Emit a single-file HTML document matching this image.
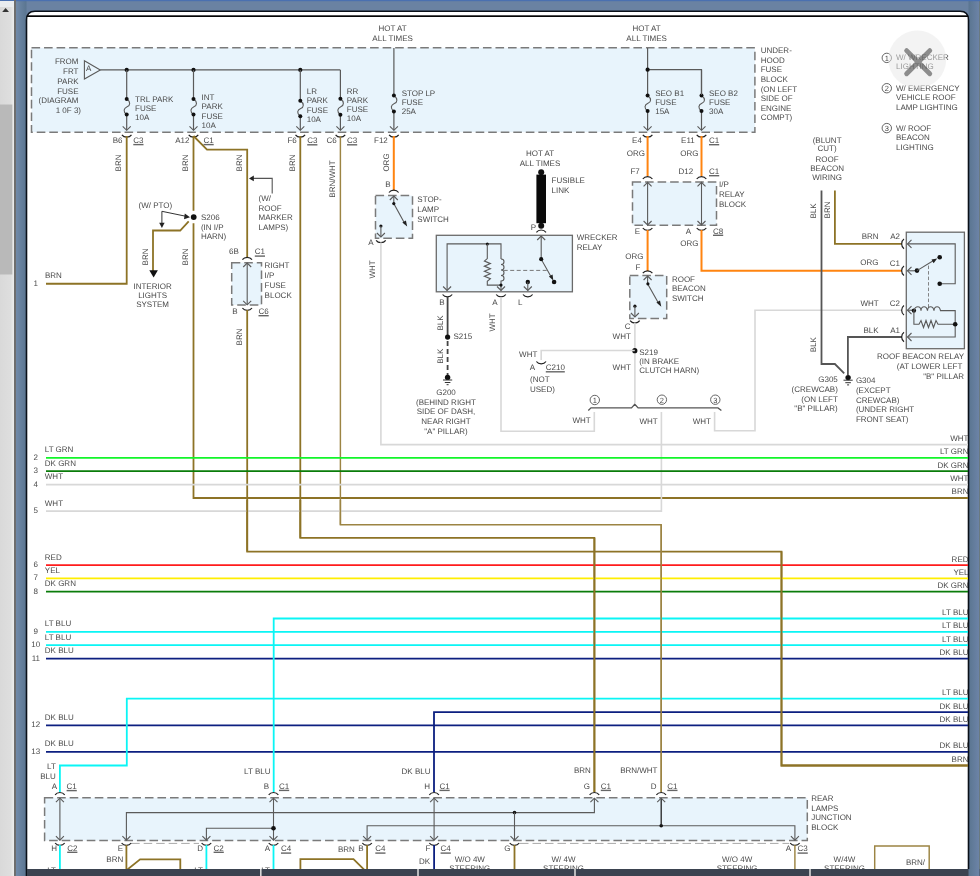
<!DOCTYPE html>
<html><head><meta charset="utf-8"><style>
html,body{margin:0;padding:0;width:980px;height:876px;overflow:hidden;background:#6b83a3;}
svg{position:absolute;left:0;top:0;will-change:transform;}
text{font-family:"Liberation Sans",sans-serif;text-rendering:geometricPrecision;}
</style></head><body>
<svg width="980" height="876" viewBox="0 0 980 876">
<defs>
<linearGradient id="bg" x1="0" y1="0" x2="0" y2="1">
<stop offset="0" stop-color="#5f7ba6"/><stop offset="0.03" stop-color="#6d86a8"/><stop offset="1" stop-color="#6a83a2"/>
</linearGradient>
<linearGradient id="lg" x1="0" y1="0" x2="1" y2="0"><stop offset="0" stop-color="#718aa9"/><stop offset="1" stop-color="#5a7590"/></linearGradient>
<linearGradient id="rg" x1="0" y1="0" x2="1" y2="0"><stop offset="0" stop-color="#5a7590"/><stop offset="1" stop-color="#6d84a8"/></linearGradient>
<linearGradient id="sb" x1="0" y1="0" x2="1" y2="0">
<stop offset="0" stop-color="#d9d9d9"/><stop offset="0.75" stop-color="#dedede"/><stop offset="1" stop-color="#ececec"/>
</linearGradient>
<clipPath id="clip"><rect x="27" y="17" width="941" height="852"/></clipPath>
</defs>
<rect x="0" y="0" width="980" height="876" fill="#6a82a2"/>
<rect x="16" y="0" width="10.5" height="876" fill="url(#lg)"/>
<rect x="968.5" y="0" width="11" height="876" fill="url(#rg)"/>
<rect x="979" y="0" width="1" height="876" fill="#6a7a80"/>
<rect x="0" y="0" width="980" height="1.2" fill="#4a70b0"/>
<rect x="0" y="1" width="14" height="875" fill="url(#sb)"/>
<rect x="0" y="1" width="14" height="6" fill="#e9ecef"/>
<path d="M2.2,12 L5.6,8 L9,12 Z" fill="#333"/>
<rect x="0" y="104.5" width="12.3" height="170" fill="#b9b9b9"/>
<rect x="14" y="0" width="2" height="876" fill="#6e6e6e"/>
<path d="M26.5,876 V20 Q26.5,11.2 35,11.2 H960 Q968.5,11.2 968.5,20 V876" fill="#fff" stroke="#0a1018" stroke-width="1.6"/>
<rect x="27" y="15.3" width="941" height="1.7" fill="#050505"/>
<rect x="27" y="869" width="953" height="7" fill="#3b4350"/>
<rect x="968.5" y="869" width="11" height="7" fill="url(#rg)"/>

<g clip-path="url(#clip)">
<rect x="31.5" y="47.8" width="723.4" height="84.39999999999999" fill="#e8f4fc" stroke="#7a7a7a" stroke-width="1.5" stroke-dasharray="8.6 3.94"/>
<text x="78.5" y="64.1" text-anchor="end" fill="#4a4a4a" font-size="8">FROM</text>
<text x="78.5" y="73.9" text-anchor="end" fill="#4a4a4a" font-size="8">FRT</text>
<text x="78.5" y="83.7" text-anchor="end" fill="#4a4a4a" font-size="8">PARK</text>
<text x="78.5" y="93.5" text-anchor="end" fill="#4a4a4a" font-size="8">FUSE</text>
<text x="78.5" y="103.3" text-anchor="end" fill="#4a4a4a" font-size="8">(DIAGRAM</text>
<text x="81" y="113.1" text-anchor="end" fill="#4a4a4a" font-size="8">1 0F 3)</text>
<path d="M84.4,60.7 L100.3,69.9 L84.4,79 Z" stroke="#5a5a5a" stroke-width="1.1" fill="none"/>
<text x="86" y="71.2" text-anchor="start" fill="#4a4a4a" font-size="8">A</text>
<path d="M100.3,69.9 H340.4" stroke="#5a5a5a" stroke-width="1.2" fill="none"/>
<circle cx="126.7" cy="69.9" r="2.1" fill="#111"/>
<circle cx="193.5" cy="69.9" r="2.1" fill="#111"/>
<circle cx="300.3" cy="69.9" r="2.1" fill="#111"/>
<path d="M126.7,69.9 V98.9 M126.7,114.6 V130.3" stroke="#5a5a5a" stroke-width="1.2" fill="none"/>
<path d="M126.7,98.9 C130.9,101.726 130.3,105.494 127.10000000000001,106.75 C123.7,108.32 122.7,111.46 126.7,114.6" stroke="#5a5a5a" stroke-width="1.1" fill="none"/>
<circle cx="126.7" cy="98.9" r="2" fill="#111"/>
<circle cx="126.7" cy="114.6" r="2" fill="#111"/>
<path d="M122.7,126.30000000000001 L126.7,130.3 L130.7,126.30000000000001" stroke="#5a5a5a" stroke-width="1.1" fill="none"/>
<path d="M121.9,134.8 C124.10000000000001,137.9 129.3,137.9 131.5,134.8" stroke="#222" stroke-width="1.2" fill="none"/>
<path d="M193.5,69.9 V98.9 M193.5,114.6 V130.3" stroke="#5a5a5a" stroke-width="1.2" fill="none"/>
<path d="M193.5,98.9 C197.7,101.726 197.1,105.494 193.9,106.75 C190.5,108.32 189.5,111.46 193.5,114.6" stroke="#5a5a5a" stroke-width="1.1" fill="none"/>
<circle cx="193.5" cy="98.9" r="2" fill="#111"/>
<circle cx="193.5" cy="114.6" r="2" fill="#111"/>
<path d="M189.5,126.30000000000001 L193.5,130.3 L197.5,126.30000000000001" stroke="#5a5a5a" stroke-width="1.1" fill="none"/>
<path d="M188.7,134.8 C190.9,137.9 196.1,137.9 198.3,134.8" stroke="#222" stroke-width="1.2" fill="none"/>
<path d="M300.3,69.9 V100.7 M300.3,116.2 V130.3" stroke="#5a5a5a" stroke-width="1.2" fill="none"/>
<path d="M300.3,100.7 C304.5,103.49000000000001 303.90000000000003,107.21000000000001 300.7,108.45 C297.3,110.0 296.3,113.10000000000001 300.3,116.2" stroke="#5a5a5a" stroke-width="1.1" fill="none"/>
<circle cx="300.3" cy="100.7" r="2" fill="#111"/>
<circle cx="300.3" cy="116.2" r="2" fill="#111"/>
<path d="M296.3,126.30000000000001 L300.3,130.3 L304.3,126.30000000000001" stroke="#5a5a5a" stroke-width="1.1" fill="none"/>
<path d="M295.5,134.8 C297.7,137.9 302.90000000000003,137.9 305.1,134.8" stroke="#222" stroke-width="1.2" fill="none"/>
<path d="M340.4,69.9 V98.8 M340.4,114.7 V130.3" stroke="#5a5a5a" stroke-width="1.2" fill="none"/>
<path d="M340.4,98.8 C344.59999999999997,101.66199999999999 344.0,105.478 340.79999999999995,106.75 C337.4,108.34 336.4,111.52 340.4,114.7" stroke="#5a5a5a" stroke-width="1.1" fill="none"/>
<circle cx="340.4" cy="98.8" r="2" fill="#111"/>
<circle cx="340.4" cy="114.7" r="2" fill="#111"/>
<path d="M336.4,126.30000000000001 L340.4,130.3 L344.4,126.30000000000001" stroke="#5a5a5a" stroke-width="1.1" fill="none"/>
<path d="M335.59999999999997,134.8 C337.79999999999995,137.9 343.0,137.9 345.2,134.8" stroke="#222" stroke-width="1.2" fill="none"/>
<path d="M393.9,48 V95.6 M393.9,111.4 V130.3" stroke="#5a5a5a" stroke-width="1.2" fill="none"/>
<path d="M393.9,95.6 C398.09999999999997,98.444 397.5,102.236 394.29999999999995,103.5 C390.9,105.08 389.9,108.24000000000001 393.9,111.4" stroke="#5a5a5a" stroke-width="1.1" fill="none"/>
<circle cx="393.9" cy="95.6" r="2" fill="#111"/>
<circle cx="393.9" cy="111.4" r="2" fill="#111"/>
<path d="M389.9,126.30000000000001 L393.9,130.3 L397.9,126.30000000000001" stroke="#5a5a5a" stroke-width="1.1" fill="none"/>
<path d="M389.09999999999997,134.8 C391.29999999999995,137.9 396.5,137.9 398.7,134.8" stroke="#222" stroke-width="1.2" fill="none"/>
<path d="M647.6,48 V95.6 M647.6,111 V130.3" stroke="#5a5a5a" stroke-width="1.2" fill="none"/>
<path d="M647.6,95.6 C651.8000000000001,98.372 651.2,102.068 648.0,103.3 C644.6,104.84 643.6,107.92 647.6,111" stroke="#5a5a5a" stroke-width="1.1" fill="none"/>
<circle cx="647.6" cy="95.6" r="2" fill="#111"/>
<circle cx="647.6" cy="111" r="2" fill="#111"/>
<path d="M643.6,126.30000000000001 L647.6,130.3 L651.6,126.30000000000001" stroke="#5a5a5a" stroke-width="1.1" fill="none"/>
<path d="M642.8000000000001,134.8 C645.0,137.9 650.2,137.9 652.4,134.8" stroke="#222" stroke-width="1.2" fill="none"/>
<path d="M701.5,69.9 V95.6 M701.5,111 V130.3" stroke="#5a5a5a" stroke-width="1.2" fill="none"/>
<path d="M701.5,95.6 C705.7,98.372 705.1,102.068 701.9,103.3 C698.5,104.84 697.5,107.92 701.5,111" stroke="#5a5a5a" stroke-width="1.1" fill="none"/>
<circle cx="701.5" cy="95.6" r="2" fill="#111"/>
<circle cx="701.5" cy="111" r="2" fill="#111"/>
<path d="M697.5,126.30000000000001 L701.5,130.3 L705.5,126.30000000000001" stroke="#5a5a5a" stroke-width="1.1" fill="none"/>
<path d="M696.7,134.8 C698.9,137.9 704.1,137.9 706.3,134.8" stroke="#222" stroke-width="1.2" fill="none"/>
<path d="M647.6,69.7 H701.5 V95" stroke="#5a5a5a" stroke-width="1.2" fill="none"/>
<circle cx="647.6" cy="69.7" r="2.1" fill="#111"/>
<text x="135.1" y="102.0" text-anchor="start" fill="#4a4a4a" font-size="8">TRL PARK</text>
<text x="135.1" y="111.0" text-anchor="start" fill="#4a4a4a" font-size="8">FUSE</text>
<text x="135.1" y="120.0" text-anchor="start" fill="#4a4a4a" font-size="8">10A</text>
<text x="201.6" y="100.2" text-anchor="start" fill="#4a4a4a" font-size="8">INT</text>
<text x="201.6" y="109.4" text-anchor="start" fill="#4a4a4a" font-size="8">PARK</text>
<text x="201.6" y="118.6" text-anchor="start" fill="#4a4a4a" font-size="8">FUSE</text>
<text x="201.6" y="127.8" text-anchor="start" fill="#4a4a4a" font-size="8">10A</text>
<text x="306.7" y="94.1" text-anchor="start" fill="#4a4a4a" font-size="8">LR</text>
<text x="306.7" y="103.3" text-anchor="start" fill="#4a4a4a" font-size="8">PARK</text>
<text x="306.7" y="112.5" text-anchor="start" fill="#4a4a4a" font-size="8">FUSE</text>
<text x="306.7" y="121.7" text-anchor="start" fill="#4a4a4a" font-size="8">10A</text>
<text x="346.8" y="94.1" text-anchor="start" fill="#4a4a4a" font-size="8">RR</text>
<text x="346.8" y="103.2" text-anchor="start" fill="#4a4a4a" font-size="8">PARK</text>
<text x="346.8" y="112.3" text-anchor="start" fill="#4a4a4a" font-size="8">FUSE</text>
<text x="346.8" y="121.4" text-anchor="start" fill="#4a4a4a" font-size="8">10A</text>
<text x="401.7" y="96.2" text-anchor="start" fill="#4a4a4a" font-size="8">STOP LP</text>
<text x="401.7" y="105.2" text-anchor="start" fill="#4a4a4a" font-size="8">FUSE</text>
<text x="401.7" y="114.2" text-anchor="start" fill="#4a4a4a" font-size="8">25A</text>
<text x="655.2" y="96.3" text-anchor="start" fill="#4a4a4a" font-size="8">SEO B1</text>
<text x="655.2" y="105.1" text-anchor="start" fill="#4a4a4a" font-size="8">FUSE</text>
<text x="655.2" y="113.9" text-anchor="start" fill="#4a4a4a" font-size="8">15A</text>
<text x="709" y="96.3" text-anchor="start" fill="#4a4a4a" font-size="8">SEO B2</text>
<text x="709" y="105.1" text-anchor="start" fill="#4a4a4a" font-size="8">FUSE</text>
<text x="709" y="113.9" text-anchor="start" fill="#4a4a4a" font-size="8">30A</text>
<text x="392.6" y="31.2" text-anchor="middle" fill="#4a4a4a" font-size="8">HOT AT</text>
<text x="392.6" y="41.1" text-anchor="middle" fill="#4a4a4a" font-size="8">ALL TIMES</text>
<text x="646.6" y="31.0" text-anchor="middle" fill="#4a4a4a" font-size="8">HOT AT</text>
<text x="646.6" y="40.9" text-anchor="middle" fill="#4a4a4a" font-size="8">ALL TIMES</text>
<text x="760.7" y="53.2" text-anchor="start" fill="#4a4a4a" font-size="8">UNDER-</text>
<text x="760.7" y="62.8" text-anchor="start" fill="#4a4a4a" font-size="8">HOOD</text>
<text x="760.7" y="72.4" text-anchor="start" fill="#4a4a4a" font-size="8">FUSE</text>
<text x="760.7" y="82.0" text-anchor="start" fill="#4a4a4a" font-size="8">BLOCK</text>
<text x="760.7" y="91.6" text-anchor="start" fill="#4a4a4a" font-size="8">(ON LEFT</text>
<text x="760.7" y="101.2" text-anchor="start" fill="#4a4a4a" font-size="8">SIDE OF</text>
<text x="760.7" y="110.8" text-anchor="start" fill="#4a4a4a" font-size="8">ENGINE</text>
<text x="760.7" y="120.4" text-anchor="start" fill="#4a4a4a" font-size="8">COMPT)</text>
<text x="122.5" y="142.9" text-anchor="end" fill="#4a4a4a" font-size="8">B6</text>
<text x="133.3" y="142.9" fill="#4a4a4a" font-size="8">C3</text>
<rect x="133.3" y="143.9" width="10.2" height="1.4" fill="#666"/>
<text x="189.5" y="142.9" text-anchor="end" fill="#4a4a4a" font-size="8">A12</text>
<text x="203.5" y="142.9" fill="#4a4a4a" font-size="8">C1</text>
<rect x="203.5" y="143.9" width="10.2" height="1.4" fill="#666"/>
<text x="296.8" y="143.1" text-anchor="end" fill="#4a4a4a" font-size="8">F6</text>
<text x="307.2" y="143.1" fill="#4a4a4a" font-size="8">C3</text>
<rect x="307.2" y="144.1" width="10.2" height="1.4" fill="#666"/>
<text x="336.7" y="143.1" text-anchor="end" fill="#4a4a4a" font-size="8">C6</text>
<text x="347" y="143.1" fill="#4a4a4a" font-size="8">C3</text>
<rect x="347" y="144.1" width="10.2" height="1.4" fill="#666"/>
<text x="387.8" y="143.1" text-anchor="end" fill="#4a4a4a" font-size="8">F12</text>
<text x="641.9" y="143.0" text-anchor="end" fill="#4a4a4a" font-size="8">E4</text>
<text x="694.7" y="143.0" text-anchor="end" fill="#4a4a4a" font-size="8">E11</text>
<text x="709" y="143.0" fill="#4a4a4a" font-size="8">C1</text>
<rect x="709" y="144.0" width="10.2" height="1.4" fill="#666"/>
<circle cx="886.8" cy="57.9" r="4.7" fill="none" stroke="#555" stroke-width="0.9"/>
<text x="886.8" y="60.7" text-anchor="middle" fill="#4a4a4a" font-size="7.5">1</text>
<text x="896" y="60.0" text-anchor="start" fill="#4a4a4a" font-size="8">W/ WRECKER</text>
<text x="896" y="69.2" text-anchor="start" fill="#4a4a4a" font-size="8">LIGHTING</text>
<circle cx="886.8" cy="88.2" r="4.7" fill="none" stroke="#555" stroke-width="0.9"/>
<text x="886.8" y="91.0" text-anchor="middle" fill="#4a4a4a" font-size="7.5">2</text>
<text x="896" y="90.8" text-anchor="start" fill="#4a4a4a" font-size="8">W/ EMERGENCY</text>
<text x="896" y="100.4" text-anchor="start" fill="#4a4a4a" font-size="8">VEHICLE ROOF</text>
<text x="896" y="110.0" text-anchor="start" fill="#4a4a4a" font-size="8">LAMP LIGHTING</text>
<circle cx="886.8" cy="128.1" r="4.7" fill="none" stroke="#555" stroke-width="0.9"/>
<text x="886.8" y="130.9" text-anchor="middle" fill="#4a4a4a" font-size="7.5">3</text>
<text x="896" y="131.2" text-anchor="start" fill="#4a4a4a" font-size="8">W/ ROOF</text>
<text x="896" y="140.45" text-anchor="start" fill="#4a4a4a" font-size="8">BEACON</text>
<text x="896" y="149.7" text-anchor="start" fill="#4a4a4a" font-size="8">LIGHTING</text>
<path d="M126.7,136 V283.75 H46" stroke="#8d7326" stroke-width="1.8" fill="none" stroke-linejoin="miter"/>
<text x="0" y="0" text-anchor="middle" fill="#4a4a4a" font-size="8" transform="translate(118.5 163) rotate(-90)" dominant-baseline="central">BRN</text>
<text x="45" y="277.8" text-anchor="start" fill="#4a4a4a" font-size="8">BRN</text>
<text x="35.8" y="285.8" text-anchor="middle" fill="#4a4a4a" font-size="8">1</text>
<path d="M193.5,136 V210.8 M193.5,223.2 V498 H968" stroke="#8d7326" stroke-width="1.8" fill="none" stroke-linejoin="miter"/>
<path d="M193.5,136 L207,149.7 H247.2 V257" stroke="#8d7326" stroke-width="1.8" fill="none" stroke-linejoin="miter"/>
<text x="0" y="0" text-anchor="middle" fill="#4a4a4a" font-size="8" transform="translate(185.5 163) rotate(-90)" dominant-baseline="central">BRN</text>
<text x="0" y="0" text-anchor="middle" fill="#4a4a4a" font-size="8" transform="translate(239 163) rotate(-90)" dominant-baseline="central">BRN</text>
<text x="0" y="0" text-anchor="middle" fill="#4a4a4a" font-size="8" transform="translate(185.5 257) rotate(-90)" dominant-baseline="central">BRN</text>
<circle cx="193.7" cy="217.1" r="2.9" fill="#111"/>
<text x="200.9" y="220.1" text-anchor="start" fill="#4a4a4a" font-size="8">S206</text>
<text x="200.9" y="229.55" text-anchor="start" fill="#4a4a4a" font-size="8">(IN I/P</text>
<text x="200.9" y="239.0" text-anchor="start" fill="#4a4a4a" font-size="8">HARN)</text>
<text x="138.6" y="208.1" text-anchor="start" fill="#4a4a4a" font-size="8">(W/ PTO)</text>
<path d="M161.9,225 V211.3 L186,216.3" stroke="#333" stroke-width="1" fill="none"/>
<path d="M190,217.3 L184.8,213.6 L184,219.2 Z" fill="#222"/>
<path d="M161.9,228 L159.2,222.8 L164.6,222.8 Z" fill="#222"/>
<path d="M188.7,221.3 L180.2,230.5 H153 V271" stroke="#8d7326" stroke-width="1.8" fill="none" stroke-linejoin="miter"/>
<path d="M149.3,270.3 L157.9,270.3 L153.6,277.5 Z" fill="#111"/>
<text x="0" y="0" text-anchor="middle" fill="#4a4a4a" font-size="8" transform="translate(145 257) rotate(-90)" dominant-baseline="central">BRN</text>
<text x="152.6" y="289.3" text-anchor="middle" fill="#4a4a4a" font-size="8">INTERIOR</text>
<text x="152.6" y="298.1" text-anchor="middle" fill="#4a4a4a" font-size="8">LIGHTS</text>
<text x="152.6" y="306.9" text-anchor="middle" fill="#4a4a4a" font-size="8">SYSTEM</text>
<path d="M272.2,193.5 V178.4 H251" stroke="#555" stroke-width="1.1" fill="none"/>
<path d="M249,178.4 L253.8,175.6 L253.8,181.2 Z" fill="#222"/>
<text x="258.5" y="200.9" text-anchor="start" fill="#4a4a4a" font-size="8">(W/</text>
<text x="258.5" y="210.5" text-anchor="start" fill="#4a4a4a" font-size="8">ROOF</text>
<text x="258.5" y="220.1" text-anchor="start" fill="#4a4a4a" font-size="8">MARKER</text>
<text x="258.5" y="229.7" text-anchor="start" fill="#4a4a4a" font-size="8">LAMPS)</text>
<path d="M242.39999999999998,259.7 C244.6,256.59999999999997 249.79999999999998,256.59999999999997 252.0,259.7" stroke="#222" stroke-width="1.2" fill="none"/>
<rect x="231.7" y="262.7" width="29.80000000000001" height="42.30000000000001" fill="#e8f4fc" stroke="#7a7a7a" stroke-width="1.5" stroke-dasharray="8.6 3.94"/>
<path d="M247.2,263 V304.8" stroke="#5a5a5a" stroke-width="1.1" fill="none"/>
<path d="M243.2,267 L247.2,263 L251.2,267" stroke="#5a5a5a" stroke-width="1.1" fill="none"/>
<path d="M243.2,300.8 L247.2,304.8 L251.2,300.8" stroke="#5a5a5a" stroke-width="1.1" fill="none"/>
<path d="M242.39999999999998,308.0 C244.6,311.1 249.79999999999998,311.1 252.0,308.0" stroke="#222" stroke-width="1.2" fill="none"/>
<text x="238.9" y="254.4" text-anchor="end" fill="#4a4a4a" font-size="8">6B</text>
<text x="254.8" y="254.4" fill="#4a4a4a" font-size="8">C1</text>
<rect x="254.8" y="255.4" width="10.2" height="1.4" fill="#666"/>
<text x="237.5" y="314.0" text-anchor="end" fill="#4a4a4a" font-size="8">B</text>
<text x="258.5" y="314.0" fill="#4a4a4a" font-size="8">C6</text>
<rect x="258.5" y="315.0" width="10.2" height="1.4" fill="#666"/>
<text x="264.6" y="267.7" text-anchor="start" fill="#4a4a4a" font-size="8">RIGHT</text>
<text x="264.6" y="277.65" text-anchor="start" fill="#4a4a4a" font-size="8">I/P</text>
<text x="264.6" y="287.6" text-anchor="start" fill="#4a4a4a" font-size="8">FUSE</text>
<text x="264.6" y="297.55" text-anchor="start" fill="#4a4a4a" font-size="8">BLOCK</text>
<path d="M247.2,310 V551.6 H781.5 V765.5 H968" stroke="#8d7326" stroke-width="1.8" fill="none" stroke-linejoin="miter"/>
<text x="0" y="0" text-anchor="middle" fill="#4a4a4a" font-size="8" transform="translate(239 337) rotate(-90)" dominant-baseline="central">BRN</text>
<path d="M300.3,136 V537.9 H594.4 V792" stroke="#8d7326" stroke-width="1.8" fill="none" stroke-linejoin="miter"/>
<text x="0" y="0" text-anchor="middle" fill="#4a4a4a" font-size="8" transform="translate(292.4 163) rotate(-90)" dominant-baseline="central">BRN</text>
<path d="M340.4,136 V524.8 H661.2 V792" stroke="#9c8443" stroke-width="1.45" fill="none" stroke-linejoin="miter"/>
<text x="0" y="0" text-anchor="middle" fill="#4a4a4a" font-size="8" transform="translate(332 179) rotate(-90)" dominant-baseline="central">BRN/WHT</text>
<path d="M393.8,136 V190.5" stroke="#ff8410" stroke-width="2" fill="none" stroke-linejoin="miter"/>
<text x="0" y="0" text-anchor="middle" fill="#4a4a4a" font-size="8" transform="translate(386.2 162.5) rotate(-90)" dominant-baseline="central">ORG</text>
<text x="390.5" y="186.6" text-anchor="end" fill="#4a4a4a" font-size="8">B</text>
<path d="M389.0,192.5 C391.2,189.4 396.40000000000003,189.4 398.6,192.5" stroke="#222" stroke-width="1.2" fill="none"/>
<rect x="375.5" y="195.6" width="37.0" height="42.70000000000002" fill="#e8f4fc" stroke="#7a7a7a" stroke-width="1.5" stroke-dasharray="8.6 3.94"/>
<path d="M389.8,200 L393.8,196 L397.8,200" stroke="#5a5a5a" stroke-width="1.1" fill="none"/>
<path d="M393.8,196 V203.6 L405,224" stroke="#5a5a5a" stroke-width="1.1" fill="none"/>
<circle cx="393.8" cy="203.6" r="1.6" fill="#111"/>
<path d="M407.2,226.5 L402.3,222.6 L405.9,220.6 Z" fill="#222"/>
<circle cx="380.9" cy="226" r="1.6" fill="#111"/>
<path d="M380.9,226 V237" stroke="#5a5a5a" stroke-width="1.1" fill="none"/>
<path d="M376.9,233 L380.9,237 L384.9,233" stroke="#5a5a5a" stroke-width="1.1" fill="none"/>
<path d="M376.09999999999997,240.3 C378.29999999999995,243.4 383.5,243.4 385.7,240.3" stroke="#222" stroke-width="1.2" fill="none"/>
<text x="373.5" y="245.0" text-anchor="end" fill="#4a4a4a" font-size="8">A</text>
<text x="417.3" y="202.3" text-anchor="start" fill="#4a4a4a" font-size="8">STOP-</text>
<text x="417.3" y="212.05" text-anchor="start" fill="#4a4a4a" font-size="8">LAMP</text>
<text x="417.3" y="221.8" text-anchor="start" fill="#4a4a4a" font-size="8">SWITCH</text>
<path d="M380.9,242.5 V444.6 H968" stroke="#d8d8d8" stroke-width="1.6" fill="none" stroke-linejoin="miter"/>
<text x="0" y="0" text-anchor="middle" fill="#4a4a4a" font-size="8" transform="translate(372.2 269.5) rotate(-90)" dominant-baseline="central">WHT</text>
<text x="540" y="156.1" text-anchor="middle" fill="#4a4a4a" font-size="8">HOT AT</text>
<text x="540" y="165.9" text-anchor="middle" fill="#4a4a4a" font-size="8">ALL TIMES</text>
<circle cx="541.2" cy="172.3" r="3" fill="#111"/>
<rect x="536.4" y="174.6" width="9.6" height="48.6" fill="#0a0a0a"/>
<circle cx="541.2" cy="225.8" r="3" fill="#111"/>
<text x="551.6" y="183.2" text-anchor="start" fill="#4a4a4a" font-size="8">FUSIBLE</text>
<text x="551.6" y="193.0" text-anchor="start" fill="#4a4a4a" font-size="8">LINK</text>
<text x="536" y="229.5" text-anchor="end" fill="#4a4a4a" font-size="8">P</text>
<path d="M536.4000000000001,232.3 C538.6,229.20000000000002 543.8000000000001,229.20000000000002 546.0,232.3" stroke="#222" stroke-width="1.2" fill="none"/>
<rect x="436.3" y="235.3" width="136.09999999999997" height="56.5" fill="#e8f4fc" stroke="#6a6a6a" stroke-width="1.3"/>
<text x="576.7" y="240.1" text-anchor="start" fill="#4a4a4a" font-size="8">WRECKER</text>
<text x="576.7" y="249.7" text-anchor="start" fill="#4a4a4a" font-size="8">RELAY</text>
<path d="M537.2,240 L541.2,236 L545.2,240" stroke="#5a5a5a" stroke-width="1.1" fill="none"/>
<path d="M541.2,236 V259.2 L551.5,277.5" stroke="#5a5a5a" stroke-width="1.1" fill="none"/>
<path d="M553.3,280.6 L548.9,276.6 L552.6,274.6 Z" fill="#222"/>
<circle cx="541.2" cy="259.2" r="2.1" fill="#111"/>
<circle cx="554.1" cy="282" r="2.3" fill="#111"/>
<path d="M503.7,270.4 H547" stroke="#777" stroke-width="1" fill="none" stroke-dasharray="4 2.5"/>
<path d="M447.1,290.5 V243.9 H501 V259" stroke="#5a5a5a" stroke-width="1.1" fill="none"/>
<circle cx="487.3" cy="243.9" r="1.5" fill="#111"/>
<path d="M487.3,243.9 V258.6 L484.4,261.11 L490.4,263.62 L484.4,266.13 L490.4,268.64 L484.4,271.16 L490.4,273.67 L484.4,276.18 L490.4,278.69 L487.3,281.2 V285.1 H501" stroke="#5a5a5a" stroke-width="1.1" fill="none"/>
<path d="M501,259 C505,259 505,264.5 501,264.5 C505,264.5 505,270 501,270 C505,270 505,275.5 501,275.5 C505,275.5 505,281 501,281 V290.5" stroke="#5a5a5a" stroke-width="1.1" fill="none"/>
<circle cx="501" cy="285.1" r="1.6" fill="#111"/>
<circle cx="527.8" cy="282" r="2.2" fill="#111"/>
<path d="M527.8,282 V290.5" stroke="#5a5a5a" stroke-width="1.1" fill="none"/>
<path d="M443.1,286.5 L447.1,290.5 L451.1,286.5" stroke="#5a5a5a" stroke-width="1.1" fill="none"/>
<path d="M497,286.5 L501,290.5 L505,286.5" stroke="#5a5a5a" stroke-width="1.1" fill="none"/>
<path d="M523.8,286.5 L527.8,290.5 L531.8,286.5" stroke="#5a5a5a" stroke-width="1.1" fill="none"/>
<path d="M442.59999999999997,294.5 C444.79999999999995,297.6 450.0,297.6 452.2,294.5" stroke="#222" stroke-width="1.2" fill="none"/>
<path d="M496.2,294.5 C498.4,297.6 503.6,297.6 505.8,294.5" stroke="#222" stroke-width="1.2" fill="none"/>
<path d="M523.0,294.5 C525.1999999999999,297.6 530.4,297.6 532.5999999999999,294.5" stroke="#222" stroke-width="1.2" fill="none"/>
<text x="444.5" y="305.3" text-anchor="end" fill="#4a4a4a" font-size="8">B</text>
<text x="497.5" y="305.3" text-anchor="end" fill="#4a4a4a" font-size="8">A</text>
<text x="518" y="305.3" text-anchor="start" fill="#4a4a4a" font-size="8">L</text>
<path d="M447.6,297 V337" stroke="#444" stroke-width="1.8" fill="none" stroke-linejoin="miter"/>
<circle cx="447.6" cy="337.1" r="2.6" fill="#111"/>
<path d="M447.6,341 V376" stroke="#444" stroke-width="1.8" fill="none" stroke-linejoin="miter" stroke-dasharray="5 3"/>
<circle cx="447.6" cy="377.4" r="2.7" fill="#111"/>
<path d="M443,380 H452.2 M444.8,382.5 H450.4 M446.6,384.7 H448.6" stroke="#333" stroke-width="1" fill="none"/>
<text x="453.4" y="339.1" text-anchor="start" fill="#4a4a4a" font-size="8">S215</text>
<text x="0" y="0" text-anchor="middle" fill="#4a4a4a" font-size="8" transform="translate(440.2 323) rotate(-90)" dominant-baseline="central">BLK</text>
<text x="0" y="0" text-anchor="middle" fill="#4a4a4a" font-size="8" transform="translate(440.2 356.3) rotate(-90)" dominant-baseline="central">BLK</text>
<text x="446" y="394.7" text-anchor="middle" fill="#4a4a4a" font-size="8">G200</text>
<text x="446" y="404.5" text-anchor="middle" fill="#4a4a4a" font-size="8">(BEHIND RIGHT</text>
<text x="446" y="414.3" text-anchor="middle" fill="#4a4a4a" font-size="8">SIDE OF DASH,</text>
<text x="446" y="424.1" text-anchor="middle" fill="#4a4a4a" font-size="8">NEAR RIGHT</text>
<text x="446" y="433.9" text-anchor="middle" fill="#4a4a4a" font-size="8">&quot;A&quot; PILLAR)</text>
<path d="M501,297 V431.2 H594.3 V412" stroke="#d8d8d8" stroke-width="1.6" fill="none" stroke-linejoin="miter"/>
<text x="0" y="0" text-anchor="middle" fill="#4a4a4a" font-size="8" transform="translate(492 322.5) rotate(-90)" dominant-baseline="central">WHT</text>
<path d="M647.6,136 V176" stroke="#ff8410" stroke-width="2" fill="none" stroke-linejoin="miter"/>
<path d="M701.5,136 V176" stroke="#ff8410" stroke-width="2" fill="none" stroke-linejoin="miter"/>
<text x="645" y="156.0" text-anchor="end" fill="#4a4a4a" font-size="8">ORG</text>
<text x="698.4" y="156.0" text-anchor="end" fill="#4a4a4a" font-size="8">ORG</text>
<text x="639.8" y="174.0" text-anchor="end" fill="#4a4a4a" font-size="8">F7</text>
<text x="693.2" y="174.0" text-anchor="end" fill="#4a4a4a" font-size="8">D12</text>
<text x="709" y="174.0" fill="#4a4a4a" font-size="8">C1</text>
<rect x="709" y="175.0" width="10.2" height="1.4" fill="#666"/>
<path d="M642.8000000000001,179.0 C645.0,175.9 650.2,175.9 652.4,179.0" stroke="#222" stroke-width="1.2" fill="none"/>
<path d="M696.7,179.0 C698.9,175.9 704.1,175.9 706.3,179.0" stroke="#222" stroke-width="1.2" fill="none"/>
<rect x="632.5" y="182.1" width="84.0" height="43.20000000000002" fill="#e8f4fc" stroke="#7a7a7a" stroke-width="1.5" stroke-dasharray="8.6 3.94"/>
<path d="M647.6,182.4 V225" stroke="#5a5a5a" stroke-width="1.1" fill="none"/>
<path d="M643.6,186.4 L647.6,182.4 L651.6,186.4" stroke="#5a5a5a" stroke-width="1.1" fill="none"/>
<path d="M643.6,221 L647.6,225 L651.6,221" stroke="#5a5a5a" stroke-width="1.1" fill="none"/>
<path d="M642.8000000000001,228.0 C645.0,231.1 650.2,231.1 652.4,228.0" stroke="#222" stroke-width="1.2" fill="none"/>
<path d="M701.5,182.4 V225" stroke="#5a5a5a" stroke-width="1.1" fill="none"/>
<path d="M697.5,186.4 L701.5,182.4 L705.5,186.4" stroke="#5a5a5a" stroke-width="1.1" fill="none"/>
<path d="M697.5,221 L701.5,225 L705.5,221" stroke="#5a5a5a" stroke-width="1.1" fill="none"/>
<path d="M696.7,228.0 C698.9,231.1 704.1,231.1 706.3,228.0" stroke="#222" stroke-width="1.2" fill="none"/>
<text x="719" y="186.8" text-anchor="start" fill="#4a4a4a" font-size="8">I/P</text>
<text x="719" y="197.0" text-anchor="start" fill="#4a4a4a" font-size="8">RELAY</text>
<text x="719" y="207.2" text-anchor="start" fill="#4a4a4a" font-size="8">BLOCK</text>
<text x="640" y="233.6" text-anchor="end" fill="#4a4a4a" font-size="8">E</text>
<text x="691" y="233.6" text-anchor="end" fill="#4a4a4a" font-size="8">A</text>
<text x="713" y="233.6" fill="#4a4a4a" font-size="8">C8</text>
<rect x="713" y="234.6" width="10.2" height="1.4" fill="#666"/>
<text x="698.4" y="246.1" text-anchor="end" fill="#4a4a4a" font-size="8">ORG</text>
<path d="M701.5,230 V270.8 H902" stroke="#ff8410" stroke-width="2" fill="none" stroke-linejoin="miter"/>
<path d="M647.6,230 V271" stroke="#ff8410" stroke-width="2" fill="none" stroke-linejoin="miter"/>
<text x="643.5" y="258.5" text-anchor="end" fill="#4a4a4a" font-size="8">ORG</text>
<text x="640.5" y="269.6" text-anchor="end" fill="#4a4a4a" font-size="8">F</text>
<path d="M642.8000000000001,273.1 C645.0,270.0 650.2,270.0 652.4,273.1" stroke="#222" stroke-width="1.2" fill="none"/>
<rect x="629.8" y="275.4" width="36.90000000000009" height="43.200000000000045" fill="#e8f4fc" stroke="#7a7a7a" stroke-width="1.5" stroke-dasharray="8.6 3.94"/>
<path d="M643.6,280 L647.6,276 L651.6,280" stroke="#5a5a5a" stroke-width="1.1" fill="none"/>
<path d="M647.6,276 V283.8 L659,304" stroke="#5a5a5a" stroke-width="1.1" fill="none"/>
<circle cx="647.9" cy="283.8" r="1.6" fill="#111"/>
<path d="M661.3,306.8 L656.4,302.6 L660,300.6 Z" fill="#222"/>
<circle cx="634.9" cy="306.2" r="1.6" fill="#111"/>
<path d="M634.9,306.2 V317" stroke="#5a5a5a" stroke-width="1.1" fill="none"/>
<path d="M630.9,313 L634.9,317 L638.9,313" stroke="#5a5a5a" stroke-width="1.1" fill="none"/>
<path d="M630.1,320.7 C632.3,323.8 637.5,323.8 639.6999999999999,320.7" stroke="#222" stroke-width="1.2" fill="none"/>
<text x="630.5" y="328.7" text-anchor="end" fill="#4a4a4a" font-size="8">C</text>
<text x="671.9" y="281.5" text-anchor="start" fill="#4a4a4a" font-size="8">ROOF</text>
<text x="671.9" y="291.3" text-anchor="start" fill="#4a4a4a" font-size="8">BEACON</text>
<text x="671.9" y="301.1" text-anchor="start" fill="#4a4a4a" font-size="8">SWITCH</text>
<text x="630.8" y="339.1" text-anchor="end" fill="#4a4a4a" font-size="8">WHT</text>
<path d="M634.9,323 V403" stroke="#d8d8d8" stroke-width="1.6" fill="none" stroke-linejoin="miter"/>
<circle cx="634.8" cy="350.7" r="2.6" fill="#111"/>
<text x="639.2" y="354.9" text-anchor="start" fill="#4a4a4a" font-size="8">S219</text>
<text x="639.2" y="364.1" text-anchor="start" fill="#4a4a4a" font-size="8">(IN BRAKE</text>
<text x="639.2" y="373.3" text-anchor="start" fill="#4a4a4a" font-size="8">CLUTCH HARN)</text>
<text x="630.8" y="370.1" text-anchor="end" fill="#4a4a4a" font-size="8">WHT</text>
<path d="M634.8,350.5 H541.2 V360" stroke="#d8d8d8" stroke-width="1.6" fill="none" stroke-linejoin="miter"/>
<path d="M536.4000000000001,361.5 C538.6,364.6 543.8000000000001,364.6 546.0,361.5" stroke="#222" stroke-width="1.2" fill="none"/>
<text x="537.3" y="357.0" text-anchor="end" fill="#4a4a4a" font-size="8">WHT</text>
<text x="535" y="370.1" text-anchor="end" fill="#4a4a4a" font-size="8">A</text>
<text x="545.8" y="370.1" fill="#4a4a4a" font-size="8">C210</text>
<rect x="545.8" y="371.1" width="19.0" height="1.4" fill="#666"/>
<text x="530" y="382.0" text-anchor="start" fill="#4a4a4a" font-size="8">(NOT</text>
<text x="530" y="391.8" text-anchor="start" fill="#4a4a4a" font-size="8">USED)</text>
<path d="M588.3,410.5 L591,407.9 H631.5 L634.8,404.3 L638.1,407.9 H718 L721.4,410.5" stroke="#555" stroke-width="1.3" fill="none"/>
<circle cx="594.8" cy="400" r="4.7" fill="none" stroke="#555" stroke-width="0.9"/>
<text x="594.8" y="402.8" text-anchor="middle" fill="#4a4a4a" font-size="7.5">1</text>
<circle cx="661.9" cy="399.7" r="4.7" fill="none" stroke="#555" stroke-width="0.9"/>
<text x="661.9" y="402.5" text-anchor="middle" fill="#4a4a4a" font-size="7.5">2</text>
<circle cx="715.3" cy="399.7" r="4.7" fill="none" stroke="#555" stroke-width="0.9"/>
<text x="715.3" y="402.5" text-anchor="middle" fill="#4a4a4a" font-size="7.5">3</text>
<text x="590.7" y="423.2" text-anchor="end" fill="#4a4a4a" font-size="8">WHT</text>
<text x="657.6" y="424.0" text-anchor="end" fill="#4a4a4a" font-size="8">WHT</text>
<text x="711" y="423.9" text-anchor="end" fill="#4a4a4a" font-size="8">WHT</text>
<path d="M661.4,412 V511.1 H46" stroke="#d8d8d8" stroke-width="1.6" fill="none" stroke-linejoin="miter"/>
<path d="M714.6,412 V430.7 H755 V310.2 H902" stroke="#d8d8d8" stroke-width="1.6" fill="none" stroke-linejoin="miter"/>
<text x="827.1" y="142.9" text-anchor="middle" fill="#4a4a4a" font-size="8">(BLUNT</text>
<text x="827.1" y="151.2" text-anchor="middle" fill="#4a4a4a" font-size="8">CUT)</text>
<text x="827.1" y="161.9" text-anchor="middle" fill="#4a4a4a" font-size="8">ROOF</text>
<text x="827.1" y="170.8" text-anchor="middle" fill="#4a4a4a" font-size="8">BEACON</text>
<text x="827.1" y="179.7" text-anchor="middle" fill="#4a4a4a" font-size="8">WIRING</text>
<path d="M821.5,190.5 V364 H834.9 L844.2,373.3" stroke="#555" stroke-width="1.8" fill="none" stroke-linejoin="miter"/>
<path d="M834.9,190.5 V243.9 H902" stroke="#8d7326" stroke-width="1.8" fill="none" stroke-linejoin="miter"/>
<text x="0" y="0" text-anchor="middle" fill="#4a4a4a" font-size="8" transform="translate(813.5 211) rotate(-90)" dominant-baseline="central">BLK</text>
<text x="0" y="0" text-anchor="middle" fill="#4a4a4a" font-size="8" transform="translate(827.1 210) rotate(-90)" dominant-baseline="central">BRN</text>
<text x="0" y="0" text-anchor="middle" fill="#4a4a4a" font-size="8" transform="translate(813.2 344.7) rotate(-90)" dominant-baseline="central">BLK</text>
<path d="M902,337 H847.9 V375" stroke="#555" stroke-width="1.8" fill="none" stroke-linejoin="miter"/>
<circle cx="848.1" cy="377.6" r="2.7" fill="#111"/>
<path d="M843.5,380.2 H852.7 M845.3,382.7 H850.9 M847.1,384.9 H849.1" stroke="#333" stroke-width="1" fill="none"/>
<text x="837.8" y="382.3" text-anchor="end" fill="#4a4a4a" font-size="8">G305</text>
<text x="837.8" y="391.9" text-anchor="end" fill="#4a4a4a" font-size="8">(CREWCAB)</text>
<text x="837.8" y="401.5" text-anchor="end" fill="#4a4a4a" font-size="8">(ON LEFT</text>
<text x="837.8" y="411.1" text-anchor="end" fill="#4a4a4a" font-size="8">&quot;B&quot; PILLAR)</text>
<text x="855.9" y="383.3" text-anchor="start" fill="#4a4a4a" font-size="8">G304</text>
<text x="855.9" y="392.9" text-anchor="start" fill="#4a4a4a" font-size="8">(EXCEPT</text>
<text x="855.9" y="402.5" text-anchor="start" fill="#4a4a4a" font-size="8">CREWCAB)</text>
<text x="855.9" y="412.1" text-anchor="start" fill="#4a4a4a" font-size="8">(UNDER RIGHT</text>
<text x="855.9" y="421.7" text-anchor="start" fill="#4a4a4a" font-size="8">FRONT SEAT)</text>
<rect x="906.3" y="232.2" width="58.10000000000002" height="116.5" fill="#e8f4fc" stroke="#6a6a6a" stroke-width="1.3"/>
<path d="M904.0,239.1 C900.9,241.3 900.9,246.5 904.0,248.70000000000002" stroke="#222" stroke-width="1.2" fill="none"/>
<path d="M911.5,239.9 L907.5,243.9 L911.5,247.9" stroke="#5a5a5a" stroke-width="1.1" fill="none"/>
<path d="M904.0,266.0 C900.9,268.2 900.9,273.40000000000003 904.0,275.6" stroke="#222" stroke-width="1.2" fill="none"/>
<path d="M911.5,266.8 L907.5,270.8 L911.5,274.8" stroke="#5a5a5a" stroke-width="1.1" fill="none"/>
<path d="M904.0,305.4 C900.9,307.59999999999997 900.9,312.8 904.0,315.0" stroke="#222" stroke-width="1.2" fill="none"/>
<path d="M911.5,306.2 L907.5,310.2 L911.5,314.2" stroke="#5a5a5a" stroke-width="1.1" fill="none"/>
<path d="M904.0,332.2 C900.9,334.4 900.9,339.6 904.0,341.8" stroke="#222" stroke-width="1.2" fill="none"/>
<path d="M911.5,333 L907.5,337 L911.5,341" stroke="#5a5a5a" stroke-width="1.1" fill="none"/>
<text x="878.6" y="239.1" text-anchor="end" fill="#4a4a4a" font-size="8">BRN</text>
<text x="900" y="239.1" text-anchor="end" fill="#4a4a4a" font-size="8">A2</text>
<text x="878.6" y="265.1" text-anchor="end" fill="#4a4a4a" font-size="8">ORG</text>
<text x="900" y="266.1" text-anchor="end" fill="#4a4a4a" font-size="8">C1</text>
<text x="878.6" y="306.3" text-anchor="end" fill="#4a4a4a" font-size="8">WHT</text>
<text x="900" y="306.3" text-anchor="end" fill="#4a4a4a" font-size="8">C2</text>
<text x="878.6" y="333.2" text-anchor="end" fill="#4a4a4a" font-size="8">BLK</text>
<text x="900" y="332.6" text-anchor="end" fill="#4a4a4a" font-size="8">A1</text>
<path d="M907.5,243.9 H955.2 V283.7 H939.7" stroke="#5a5a5a" stroke-width="1.1" fill="none"/>
<circle cx="939.7" cy="283.7" r="2.3" fill="#111"/>
<path d="M907.5,270.8 H917" stroke="#5a5a5a" stroke-width="1.1" fill="none"/>
<circle cx="917" cy="270.6" r="2.3" fill="#111"/>
<path d="M917,270.6 L934,260.3" stroke="#5a5a5a" stroke-width="1.1" fill="none"/>
<path d="M937.2,258.6 L931.5,259.6 L933.6,263.2 Z" fill="#222"/>
<circle cx="939.7" cy="257.3" r="2.3" fill="#111"/>
<path d="M928.5,265.6 V308.3" stroke="#777" stroke-width="0.9" fill="none" stroke-dasharray="3.5 2"/>
<path d="M907.5,310.2 H913.9" stroke="#5a5a5a" stroke-width="1.1" fill="none"/>
<circle cx="913.9" cy="310.6" r="2.2" fill="#111"/>
<path d="M913.9,310.6 C915.5,305.5 920.5,305.5 921,310.6 C921.5,305.5 926.5,305.5 927.5,310.6 C928,305.5 933,305.5 934,310.6 C934.5,305.5 939.5,305.5 940.5,310.6 H955.2 V337 H907.5" stroke="#5a5a5a" stroke-width="1.1" fill="none"/>
<path d="M913.9,310.6 V324.2 H919 L921,320.5 L923.5,327.5 L926,320.5 L928.5,327.5 L931,320.5 L933.5,327.5 L936,320.5 L938,324.2 H955.2" stroke="#5a5a5a" stroke-width="1.1" fill="none"/>
<circle cx="955.2" cy="324.2" r="2.3" fill="#111"/>
<text x="964" y="359.1" text-anchor="end" fill="#4a4a4a" font-size="8">ROOF BEACON RELAY</text>
<text x="962.3" y="368.8" text-anchor="end" fill="#4a4a4a" font-size="8">(AT LOWER LEFT</text>
<text x="964" y="378.5" text-anchor="end" fill="#4a4a4a" font-size="8">&quot;B&quot; PILLAR</text>
<text x="968.5" y="440.9" text-anchor="end" fill="#4a4a4a" font-size="8">WHT</text>
<text x="968.5" y="494.3" text-anchor="end" fill="#4a4a4a" font-size="8">BRN</text>
<path d="M46,457.9 H968" stroke="#12f52a" stroke-width="1.8" fill="none" stroke-linejoin="miter"/>
<text x="44.8" y="452.3" text-anchor="start" fill="#4a4a4a" font-size="8">LT GRN</text>
<text x="35.8" y="459.9" text-anchor="middle" fill="#4a4a4a" font-size="8">2</text>
<text x="968.5" y="454.3" text-anchor="end" fill="#4a4a4a" font-size="8">LT GRN</text>
<path d="M46,471.2 H968" stroke="#0a7c0a" stroke-width="1.8" fill="none" stroke-linejoin="miter"/>
<text x="44.8" y="465.6" text-anchor="start" fill="#4a4a4a" font-size="8">DK GRN</text>
<text x="35.8" y="473.2" text-anchor="middle" fill="#4a4a4a" font-size="8">3</text>
<text x="968.5" y="467.6" text-anchor="end" fill="#4a4a4a" font-size="8">DK GRN</text>
<path d="M46,484.6 H968" stroke="#d8d8d8" stroke-width="1.6" fill="none" stroke-linejoin="miter"/>
<text x="44.8" y="478.8" text-anchor="start" fill="#4a4a4a" font-size="8">WHT</text>
<text x="35.8" y="486.6" text-anchor="middle" fill="#4a4a4a" font-size="8">4</text>
<text x="968.5" y="481.1" text-anchor="end" fill="#4a4a4a" font-size="8">WHT</text>
<text x="44.8" y="505.5" text-anchor="start" fill="#4a4a4a" font-size="8">WHT</text>
<text x="35.8" y="513.1" text-anchor="middle" fill="#4a4a4a" font-size="8">5</text>
<path d="M46,565.1 H968" stroke="#ff1c1c" stroke-width="1.8" fill="none" stroke-linejoin="miter"/>
<text x="44.8" y="559.5" text-anchor="start" fill="#4a4a4a" font-size="8">RED</text>
<text x="35.8" y="567.1" text-anchor="middle" fill="#4a4a4a" font-size="8">6</text>
<text x="968.5" y="561.5" text-anchor="end" fill="#4a4a4a" font-size="8">RED</text>
<path d="M46,578.3 H968" stroke="#ffee00" stroke-width="1.8" fill="none" stroke-linejoin="miter"/>
<text x="44.8" y="572.7" text-anchor="start" fill="#4a4a4a" font-size="8">YEL</text>
<text x="35.8" y="580.3" text-anchor="middle" fill="#4a4a4a" font-size="8">7</text>
<text x="968.5" y="574.7" text-anchor="end" fill="#4a4a4a" font-size="8">YEL</text>
<path d="M46,591.6 H968" stroke="#0a7c0a" stroke-width="1.8" fill="none" stroke-linejoin="miter"/>
<text x="44.8" y="586.0" text-anchor="start" fill="#4a4a4a" font-size="8">DK GRN</text>
<text x="35.8" y="593.6" text-anchor="middle" fill="#4a4a4a" font-size="8">8</text>
<text x="968.5" y="588.0" text-anchor="end" fill="#4a4a4a" font-size="8">DK GRN</text>
<path d="M46,631.9 H968" stroke="#0af5f5" stroke-width="1.8" fill="none" stroke-linejoin="miter"/>
<text x="44.8" y="626.3" text-anchor="start" fill="#4a4a4a" font-size="8">LT BLU</text>
<text x="35.8" y="633.9" text-anchor="middle" fill="#4a4a4a" font-size="8">9</text>
<text x="968.5" y="628.3" text-anchor="end" fill="#4a4a4a" font-size="8">LT BLU</text>
<path d="M46,645.1 H968" stroke="#0af5f5" stroke-width="1.8" fill="none" stroke-linejoin="miter"/>
<text x="44.8" y="639.5" text-anchor="start" fill="#4a4a4a" font-size="8">LT BLU</text>
<text x="35.8" y="647.1" text-anchor="middle" fill="#4a4a4a" font-size="8">10</text>
<text x="968.5" y="641.5" text-anchor="end" fill="#4a4a4a" font-size="8">LT BLU</text>
<path d="M46,658.6 H968" stroke="#0c1f80" stroke-width="1.8" fill="none" stroke-linejoin="miter"/>
<text x="44.8" y="653.0" text-anchor="start" fill="#4a4a4a" font-size="8">DK BLU</text>
<text x="35.8" y="660.6" text-anchor="middle" fill="#4a4a4a" font-size="8">11</text>
<text x="968.5" y="655.0" text-anchor="end" fill="#4a4a4a" font-size="8">DK BLU</text>
<path d="M46,725.4 H968" stroke="#0c1f80" stroke-width="1.8" fill="none" stroke-linejoin="miter"/>
<text x="44.8" y="719.8" text-anchor="start" fill="#4a4a4a" font-size="8">DK BLU</text>
<text x="35.8" y="727.4" text-anchor="middle" fill="#4a4a4a" font-size="8">12</text>
<text x="968.5" y="721.8" text-anchor="end" fill="#4a4a4a" font-size="8">DK BLU</text>
<path d="M46,751.9 H968" stroke="#0c1f80" stroke-width="1.8" fill="none" stroke-linejoin="miter"/>
<text x="44.8" y="746.3" text-anchor="start" fill="#4a4a4a" font-size="8">DK BLU</text>
<text x="35.8" y="753.9" text-anchor="middle" fill="#4a4a4a" font-size="8">13</text>
<text x="968.5" y="748.3" text-anchor="end" fill="#4a4a4a" font-size="8">DK BLU</text>
<path d="M968,618.5 H273.7 V792" stroke="#0af5f5" stroke-width="1.8" fill="none" stroke-linejoin="miter"/>
<text x="968.5" y="615.1" text-anchor="end" fill="#4a4a4a" font-size="8">LT BLU</text>
<path d="M968,698.7 H126.8 V765.5 H59.9 V792" stroke="#0af5f5" stroke-width="1.8" fill="none" stroke-linejoin="miter"/>
<text x="968.5" y="695.1" text-anchor="end" fill="#4a4a4a" font-size="8">LT BLU</text>
<path d="M968,712.2 H434 V792" stroke="#0c1f80" stroke-width="1.8" fill="none" stroke-linejoin="miter"/>
<text x="968.5" y="708.8" text-anchor="end" fill="#4a4a4a" font-size="8">DK BLU</text>
<text x="968.5" y="762.1" text-anchor="end" fill="#4a4a4a" font-size="8">BRN</text>
<path d="M594.4,537.9 V792" stroke="#8d7326" stroke-width="1.8" fill="none" stroke-linejoin="miter"/>
<path d="M661.2,524.8 V792" stroke="#9c8443" stroke-width="1.45" fill="none" stroke-linejoin="miter"/>
<path d="M781.5,551.6 V765.5 H968" stroke="#8d7326" stroke-width="1.8" fill="none" stroke-linejoin="miter"/>
<path d="M247.2,500 V551.6" stroke="#8d7326" stroke-width="1.8" fill="none" stroke-linejoin="miter"/>
<path d="M300.3,500 V537.9" stroke="#8d7326" stroke-width="1.8" fill="none" stroke-linejoin="miter"/>
<path d="M340.4,500 V524.8" stroke="#9c8443" stroke-width="1.45" fill="none" stroke-linejoin="miter"/>
<text x="55.8" y="768.9" text-anchor="end" fill="#4a4a4a" font-size="8">LT</text>
<text x="55.8" y="778.7" text-anchor="end" fill="#4a4a4a" font-size="8">BLU</text>
<text x="57" y="788.9" text-anchor="end" fill="#4a4a4a" font-size="8">A</text>
<text x="66.6" y="788.9" fill="#4a4a4a" font-size="8">C1</text>
<rect x="66.6" y="789.9" width="10.2" height="1.4" fill="#666"/>
<text x="270.5" y="774.3" text-anchor="end" fill="#4a4a4a" font-size="8">LT BLU</text>
<text x="269" y="788.7" text-anchor="end" fill="#4a4a4a" font-size="8">B</text>
<text x="279" y="788.7" fill="#4a4a4a" font-size="8">C1</text>
<rect x="279" y="789.7" width="10.2" height="1.4" fill="#666"/>
<text x="430.5" y="774.3" text-anchor="end" fill="#4a4a4a" font-size="8">DK BLU</text>
<text x="430" y="788.7" text-anchor="end" fill="#4a4a4a" font-size="8">H</text>
<text x="439.5" y="788.7" fill="#4a4a4a" font-size="8">C1</text>
<rect x="439.5" y="789.7" width="10.2" height="1.4" fill="#666"/>
<text x="590.9" y="773.3" text-anchor="end" fill="#4a4a4a" font-size="8">BRN</text>
<text x="590" y="788.7" text-anchor="end" fill="#4a4a4a" font-size="8">G</text>
<text x="600.8" y="788.7" fill="#4a4a4a" font-size="8">C1</text>
<rect x="600.8" y="789.7" width="10.2" height="1.4" fill="#666"/>
<text x="657.5" y="773.3" text-anchor="end" fill="#4a4a4a" font-size="8">BRN/WHT</text>
<text x="656.5" y="788.7" text-anchor="end" fill="#4a4a4a" font-size="8">D</text>
<text x="667.3" y="788.7" fill="#4a4a4a" font-size="8">C1</text>
<rect x="667.3" y="789.7" width="10.2" height="1.4" fill="#666"/>
<path d="M55.1,794.8 C57.3,791.6999999999999 62.5,791.6999999999999 64.7,794.8" stroke="#222" stroke-width="1.2" fill="none"/>
<path d="M268.7,794.8 C270.9,791.6999999999999 276.1,791.6999999999999 278.3,794.8" stroke="#222" stroke-width="1.2" fill="none"/>
<path d="M429.3,794.8 C431.5,791.6999999999999 436.70000000000005,791.6999999999999 438.90000000000003,794.8" stroke="#222" stroke-width="1.2" fill="none"/>
<path d="M589.6,794.8 C591.8,791.6999999999999 597.0,791.6999999999999 599.1999999999999,794.8" stroke="#222" stroke-width="1.2" fill="none"/>
<path d="M656.4000000000001,794.8 C658.6,791.6999999999999 663.8000000000001,791.6999999999999 666.0,794.8" stroke="#222" stroke-width="1.2" fill="none"/>
<rect x="44.6" y="797.8" width="762.6999999999999" height="42.700000000000045" fill="#e8f4fc" stroke="#7a7a7a" stroke-width="1.5" stroke-dasharray="8.6 3.94"/>
<path d="M131.2,843.4 H199 M520,843.4 H789" stroke="#a8a8a8" stroke-width="1" fill="none" stroke-dasharray="8.5 4"/>
<path d="M59.9,798.2 V840.2" stroke="#5a5a5a" stroke-width="1.1" fill="none"/>
<path d="M55.9,802.2 L59.9,798.2 L63.9,802.2" stroke="#5a5a5a" stroke-width="1.1" fill="none"/>
<path d="M55.9,836.2 L59.9,840.2 L63.9,836.2" stroke="#5a5a5a" stroke-width="1.1" fill="none"/>
<path d="M273.5,798.2 V840.2" stroke="#5a5a5a" stroke-width="1.1" fill="none"/>
<path d="M269.5,802.2 L273.5,798.2 L277.5,802.2" stroke="#5a5a5a" stroke-width="1.1" fill="none"/>
<path d="M269.5,836.2 L273.5,840.2 L277.5,836.2" stroke="#5a5a5a" stroke-width="1.1" fill="none"/>
<path d="M434.1,798.2 V840.2" stroke="#5a5a5a" stroke-width="1.1" fill="none"/>
<path d="M430.1,802.2 L434.1,798.2 L438.1,802.2" stroke="#5a5a5a" stroke-width="1.1" fill="none"/>
<path d="M430.1,836.2 L434.1,840.2 L438.1,836.2" stroke="#5a5a5a" stroke-width="1.1" fill="none"/>
<path d="M126.4,840.2 V812.6 H594.4 V798.2" stroke="#5a5a5a" stroke-width="1.1" fill="none"/>
<path d="M122.4,836.2 L126.4,840.2 L130.4,836.2" stroke="#5a5a5a" stroke-width="1.1" fill="none"/>
<path d="M590.4,802.2 L594.4,798.2 L598.4,802.2" stroke="#5a5a5a" stroke-width="1.1" fill="none"/>
<circle cx="514.5" cy="812.6" r="1.8" fill="#111"/>
<path d="M514.5,812.6 V840.2" stroke="#5a5a5a" stroke-width="1.1" fill="none"/>
<path d="M510.5,836.2 L514.5,840.2 L518.5,836.2" stroke="#5a5a5a" stroke-width="1.1" fill="none"/>
<path d="M206.4,840.2 V828.2 H273.5" stroke="#5a5a5a" stroke-width="1.1" fill="none"/>
<path d="M202.4,836.2 L206.4,840.2 L210.4,836.2" stroke="#5a5a5a" stroke-width="1.1" fill="none"/>
<circle cx="273.5" cy="828.2" r="2.3" fill="#111"/>
<path d="M367.1,840.2 V825.7 H794.9 V840.2" stroke="#5a5a5a" stroke-width="1.1" fill="none"/>
<path d="M363.1,836.2 L367.1,840.2 L371.1,836.2" stroke="#5a5a5a" stroke-width="1.1" fill="none"/>
<path d="M790.9,836.2 L794.9,840.2 L798.9,836.2" stroke="#5a5a5a" stroke-width="1.1" fill="none"/>
<circle cx="661.2" cy="825.7" r="1.8" fill="#111"/>
<path d="M661.2,825.7 V798.2" stroke="#222" stroke-width="1.3" fill="none"/>
<path d="M657.2,802.2 L661.2,798.2 L665.2,802.2" stroke="#5a5a5a" stroke-width="1.1" fill="none"/>
<path d="M55.1,843.0 C57.3,846.1 62.5,846.1 64.7,843.0" stroke="#222" stroke-width="1.2" fill="none"/>
<path d="M121.60000000000001,843.0 C123.80000000000001,846.1 129.0,846.1 131.20000000000002,843.0" stroke="#222" stroke-width="1.2" fill="none"/>
<path d="M201.6,843.0 C203.8,846.1 209.0,846.1 211.20000000000002,843.0" stroke="#222" stroke-width="1.2" fill="none"/>
<path d="M268.7,843.0 C270.9,846.1 276.1,846.1 278.3,843.0" stroke="#222" stroke-width="1.2" fill="none"/>
<path d="M362.3,843.0 C364.5,846.1 369.70000000000005,846.1 371.90000000000003,843.0" stroke="#222" stroke-width="1.2" fill="none"/>
<path d="M429.3,843.0 C431.5,846.1 436.70000000000005,846.1 438.90000000000003,843.0" stroke="#222" stroke-width="1.2" fill="none"/>
<path d="M509.7,843.0 C511.9,846.1 517.1,846.1 519.3,843.0" stroke="#222" stroke-width="1.2" fill="none"/>
<path d="M790.1,843.0 C792.3,846.1 797.5,846.1 799.6999999999999,843.0" stroke="#222" stroke-width="1.2" fill="none"/>
<text x="811.2" y="800.9" text-anchor="start" fill="#4a4a4a" font-size="8">REAR</text>
<text x="811.2" y="810.5" text-anchor="start" fill="#4a4a4a" font-size="8">LAMPS</text>
<text x="811.2" y="820.1" text-anchor="start" fill="#4a4a4a" font-size="8">JUNCTION</text>
<text x="811.2" y="829.7" text-anchor="start" fill="#4a4a4a" font-size="8">BLOCK</text>
<text x="57" y="850.6" text-anchor="end" fill="#4a4a4a" font-size="8">H</text>
<text x="67.2" y="850.6" fill="#4a4a4a" font-size="8">C2</text>
<rect x="67.2" y="851.6" width="10.2" height="1.4" fill="#666"/>
<text x="123" y="851.4" text-anchor="end" fill="#4a4a4a" font-size="8">E</text>
<text x="203" y="850.6" text-anchor="end" fill="#4a4a4a" font-size="8">D</text>
<text x="213.6" y="850.6" fill="#4a4a4a" font-size="8">C2</text>
<rect x="213.6" y="851.6" width="10.2" height="1.4" fill="#666"/>
<text x="270" y="851.4" text-anchor="end" fill="#4a4a4a" font-size="8">A</text>
<text x="281" y="851.4" fill="#4a4a4a" font-size="8">C4</text>
<rect x="281" y="852.4" width="10.2" height="1.4" fill="#666"/>
<text x="354.9" y="852.3" text-anchor="end" fill="#4a4a4a" font-size="8">BRN</text>
<text x="363.5" y="851.4" text-anchor="end" fill="#4a4a4a" font-size="8">B</text>
<text x="375.3" y="851.4" fill="#4a4a4a" font-size="8">C4</text>
<rect x="375.3" y="852.4" width="10.2" height="1.4" fill="#666"/>
<text x="430.5" y="851.4" text-anchor="end" fill="#4a4a4a" font-size="8">F</text>
<text x="440.6" y="851.4" fill="#4a4a4a" font-size="8">C4</text>
<rect x="440.6" y="852.4" width="10.2" height="1.4" fill="#666"/>
<text x="510.5" y="851.4" text-anchor="end" fill="#4a4a4a" font-size="8">G</text>
<text x="791" y="851.4" text-anchor="end" fill="#4a4a4a" font-size="8">A</text>
<text x="797.6" y="851.4" fill="#4a4a4a" font-size="8">C3</text>
<rect x="797.6" y="852.4" width="10.2" height="1.4" fill="#666"/>
<text x="123.2" y="861.9" text-anchor="end" fill="#4a4a4a" font-size="8">BRN</text>
<text x="430" y="864.2" text-anchor="end" fill="#4a4a4a" font-size="8">DK</text>
<text x="56" y="873.3" text-anchor="end" fill="#4a4a4a" font-size="8">LT</text>
<text x="203" y="873.3" text-anchor="end" fill="#4a4a4a" font-size="8">LT</text>
<text x="270" y="873.3" text-anchor="end" fill="#4a4a4a" font-size="8">LT</text>
<text x="469.8" y="861.7" text-anchor="middle" fill="#4a4a4a" font-size="8">W/O 4W</text>
<text x="469.8" y="871.3" text-anchor="middle" fill="#4a4a4a" font-size="8">STEERING</text>
<text x="563.5" y="861.7" text-anchor="middle" fill="#4a4a4a" font-size="8">W/ 4W</text>
<text x="563.5" y="871.3" text-anchor="middle" fill="#4a4a4a" font-size="8">STEERING</text>
<text x="737.1" y="861.7" text-anchor="middle" fill="#4a4a4a" font-size="8">W/O 4W</text>
<text x="737.1" y="871.3" text-anchor="middle" fill="#4a4a4a" font-size="8">STEERING</text>
<text x="844.5" y="861.7" text-anchor="middle" fill="#4a4a4a" font-size="8">W/4W</text>
<text x="844.5" y="871.3" text-anchor="middle" fill="#4a4a4a" font-size="8">STEERING</text>
<text x="925" y="865.2" text-anchor="end" fill="#4a4a4a" font-size="8">BRN/</text>
<path d="M59.9,845 V870" stroke="#0af5f5" stroke-width="1.8" fill="none" stroke-linejoin="miter"/>
<path d="M206.4,845 V870" stroke="#0af5f5" stroke-width="1.8" fill="none" stroke-linejoin="miter"/>
<path d="M273.5,845 V870" stroke="#0af5f5" stroke-width="1.8" fill="none" stroke-linejoin="miter"/>
<path d="M434.1,845 V870" stroke="#0c1f80" stroke-width="1.8" fill="none" stroke-linejoin="miter"/>
<path d="M126.4,845 V870" stroke="#8d7326" stroke-width="1.8" fill="none" stroke-linejoin="miter"/>
<path d="M126.8,870 L140.1,859.4 H180.3 V870" stroke="#8d7326" stroke-width="1.8" fill="none" stroke-linejoin="miter"/>
<path d="M367.1,845 V870" stroke="#8d7326" stroke-width="1.8" fill="none" stroke-linejoin="miter"/>
<path d="M300.4,870 V859.2 H353.5 L364.5,870" stroke="#8d7326" stroke-width="1.8" fill="none" stroke-linejoin="miter"/>
<path d="M514.5,845 V870" stroke="#8d7326" stroke-width="1.8" fill="none" stroke-linejoin="miter"/>
<path d="M794.9,845 V870" stroke="#9c8443" stroke-width="1.45" fill="none" stroke-linejoin="miter"/>
<path d="M874.7,870 V845.9 H929.2 V870" stroke="#9c8443" stroke-width="1.45" fill="none" stroke-linejoin="miter"/>
</g>
<rect x="260.0" y="869" width="1.6" height="7" fill="#d8d8d8"/>
<rect x="417.2" y="869" width="1.6" height="7" fill="#d8d8d8"/>
<rect x="574.2" y="869" width="1.6" height="7" fill="#d8d8d8"/>
<rect x="809.2" y="869" width="1.6" height="7" fill="#d8d8d8"/>
<circle cx="917.3" cy="59.4" r="28.9" fill="#e8e8e8" fill-opacity="0.5"/>
<g opacity="0.6"><path d="M906.6,50.6 L929.8,73.8 M929.8,50.6 L906.6,73.8" stroke="#4a4a4a" stroke-width="4.8" stroke-linecap="round"/></g>
</svg></body></html>
